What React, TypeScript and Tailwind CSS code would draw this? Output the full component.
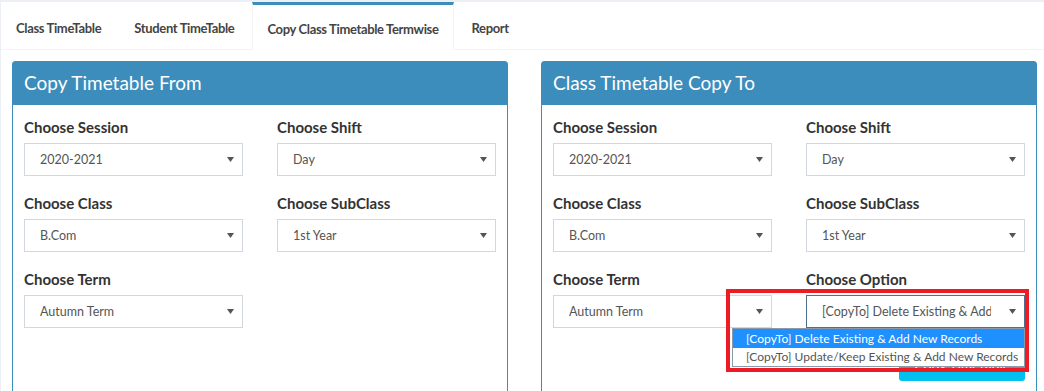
import React from "react";

const tabs = ["Class TimeTable", "Student TimeTable", "Copy Class Timetable Termwise", "Report"];

function Arrow() {
  return (
    <svg width="7" height="5" viewBox="0 0 7 5" className="shrink-0">
      <path d="M0 0h7L3.5 5z" fill="#555" />
    </svg>
  );
}

interface SelectProp {
  value: string;
  focused?: boolean;
}

function SelectBox({ value, focused }: SelectProp) {
  return (
    <div
      className={`flex h-[33px] items-center bg-white pl-[15px] pr-[8px] text-[12.5px] text-[#555] border ${
        focused ? "border-[#4f6f8f]" : "border-[#d2d6de]"
      }`}
    >
      <span className="min-w-0 flex-1 overflow-hidden whitespace-nowrap mr-[18px] pt-[2px]">{value}</span>
      <Arrow />
    </div>
  );
}

function Field({ label, children }: { label: string; children: React.ReactNode }) {
  return (
    <div className="flex flex-col">
      <label className="mb-[6px] text-[15px] leading-5 font-bold text-[#333]">{label}</label>
      {children}
    </div>
  );
}

function Panel({ title, children }: { title: string; children: React.ReactNode }) {
  return (
    <div className="w-[496px] rounded-t-[3px] border border-[#3c8dbc] bg-white">
      <div className="flex h-[43px] items-center bg-[#3c8dbc] px-[11px] text-[19px] text-white">{title}</div>
      <div className="flex flex-col px-[11px] pt-[12px] pb-[40px]">{children}</div>
    </div>
  );
}

export default function App() {
  return (
    <div
      className="relative min-h-screen bg-[#ecf0f5] pt-[2px] pl-[1px]"
      style={{ fontFamily: "Lato, 'Open Sans', sans-serif" }}
    >
      <div className="h-[420px] overflow-hidden bg-white">
        <ul className="flex h-[48px] border-b border-[#f4f4f4]">
          {tabs.map((t, i) =>
            i === 2 ? (
              <li
                key={t}
                className="relative -mb-px mr-[3px] flex h-[48px] items-center border-x border-t-[3px] border-x-[#f4f4f4] border-t-[#3c8dbc] bg-white px-[14px] pt-[4px] text-[13px] tracking-[-0.35px] font-bold text-[#444]"
              >
                {t}
              </li>
            ) : (
              <li
                key={t}
                className="mr-[3px] flex h-[47px] items-center border-t-[3px] border-transparent px-[15px] pt-[4px] text-[13px] tracking-[-0.35px] font-bold text-[#444]"
              >
                {t}
              </li>
            )
          )}
        </ul>

        <div className="flex gap-[33px] pt-[11px] pl-[11px]">
          <Panel title="Copy Timetable From">
            <div className="grid grid-cols-2 gap-x-[34px] gap-y-[17px]">
              <Field label="Choose Session">
                <SelectBox value="2020-2021" />
              </Field>
              <Field label="Choose Shift">
                <SelectBox value="Day" />
              </Field>
              <Field label="Choose Class">
                <SelectBox value="B.Com" />
              </Field>
              <Field label="Choose SubClass">
                <SelectBox value="1st Year" />
              </Field>
              <Field label="Choose Term">
                <SelectBox value="Autumn Term" />
              </Field>
            </div>
          </Panel>

          <Panel title="Class Timetable Copy To">
            <div className="grid grid-cols-2 gap-x-[34px] gap-y-[17px]">
              <Field label="Choose Session">
                <SelectBox value="2020-2021" />
              </Field>
              <Field label="Choose Shift">
                <SelectBox value="Day" />
              </Field>
              <Field label="Choose Class">
                <SelectBox value="B.Com" />
              </Field>
              <Field label="Choose SubClass">
                <SelectBox value="1st Year" />
              </Field>
              <Field label="Choose Term">
                <SelectBox value="Autumn Term" />
              </Field>
              <Field label="Choose Option">
                <div className="relative">
                  <SelectBox value="[CopyTo] Delete Existing & Add New Records" focused />
                  <div className="absolute top-full right-0 z-10 w-[293px] border border-[#8a9aaa] bg-white text-[12px]">
                    <div className="flex h-[19px] items-center bg-[#1e90ff] pl-[13px] whitespace-nowrap text-white">
                      [CopyTo] Delete Existing &amp; Add New Records
                    </div>
                    <div className="flex h-[18px] items-center overflow-hidden pl-[13px] whitespace-nowrap text-[#555]">
                      [CopyTo] Update/Keep Existing &amp; Add New Records
                    </div>
                  </div>
                </div>
              </Field>
            </div>
            <div className="mt-[20px] flex justify-end">
              <button className="h-[33px] w-[126px] rounded-[3px] bg-[#00c0ef] text-[14px] text-white">
                Copy Timetable
              </button>
            </div>
          </Panel>
        </div>
      </div>

      <div className="pointer-events-none absolute top-[289px] left-[726px] z-20 h-[83px] w-[303px] border-4 border-[#ed1c24]" />
    </div>
  );
}
